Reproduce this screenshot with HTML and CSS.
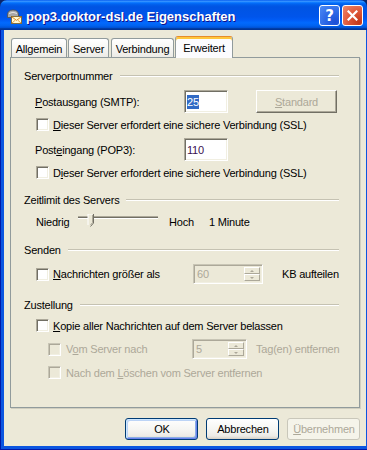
FILE: index.html
```html
<!DOCTYPE html>
<html lang="de">
<head>
    <meta charset="UTF-8">
    <title>pop3.doktor-dsl.de Eigenschaften</title>
    <link rel="stylesheet" href="styles.css">
</head>
<body>
    <div class="window">
        <div class="titlebar">
            <svg class="title-icon" width="16" height="16" viewBox="0 0 16 16">
                <path d="M1.5 7 Q1.5 2 7 2 Q12.5 2 12.5 7 L12.5 9.5 L1.5 9.5 Z" fill="#a8a8a8" stroke="#4f4f4f" stroke-width="0.8"/>
                <path d="M3 5.5 Q7 3 11 5.5" fill="none" stroke="#e6e6e6" stroke-width="1"/>
                <rect x="5.4" y="8.4" width="10.2" height="7.2" fill="#fffbd2" stroke="#7a5a1a" stroke-width="0.8"/>
                <path d="M5.8 8.8 L10.5 12.4 L15.2 8.8" fill="none" stroke="#e0872a" stroke-width="1"/>
                <path d="M5.8 15.2 L9.2 12.2 M15.2 15.2 L11.8 12.2" stroke="#e0872a" stroke-width="0.8"/>
            </svg>
            <span class="title-text">pop3.doktor-dsl.de Eigenschaften</span>
            <div class="title-buttons">
                <span class="tb-btn help">?</span>
                <span class="tb-btn close">
                    <svg width="11" height="11" viewBox="0 0 11 11">
                        <path d="M1.5 1.5 L9.5 9.5 M9.5 1.5 L1.5 9.5" stroke="#fff" stroke-width="2.2" stroke-linecap="square"/>
                    </svg>
                </span>
            </div>
        </div>

        <div class="frame">
            <div class="client">
                <div class="tabs">
                    <div class="tab tab-allgemein">Allgemein</div>
                    <div class="tab tab-server">Server</div>
                    <div class="tab tab-verbindung">Verbindung</div>
                    <div class="tab tab-erweitert active">Erweitert</div>
                </div>

                <div class="panel">
                    <div class="group">
                        <div class="group-title"><span>Serverportnummer</span><span class="etched"></span></div>
                        <div class="row port">
                            <span class="field-label"><u>P</u>ostausgang (SMTP):</span>
                            <span class="textbox"><span class="selected">25</span></span>
                            <span class="classic-btn"><u>S</u>tandard</span>
                        </div>
                        <div class="row ssl">
                            <span class="check"></span>
                            <span><u>D</u>ieser Server erfordert eine sichere Verbindung (SSL)</span>
                        </div>
                        <div class="row port">
                            <span class="field-label">Post<u>e</u>ingang (POP3):</span>
                            <span class="textbox"><span class="value">110</span></span>
                        </div>
                        <div class="row ssl">
                            <span class="check"></span>
                            <span>D<u>i</u>eser Server erfordert eine sichere Verbindung (SSL)</span>
                        </div>
                    </div>

                    <div class="group">
                        <div class="group-title"><span>Zeitlimit des Servers</span><span class="etched"></span></div>
                        <div class="row slider-row">
                            <span class="slider-low">Niedrig</span>
                            <svg class="slider" width="80" height="15" viewBox="0 0 80 15">
                                <rect x="0" y="2" width="80" height="1" fill="#aca899"/>
                                <rect x="0" y="3" width="80" height="1" fill="#716f64"/>
                                <rect x="0" y="4" width="80" height="1" fill="#ffffff"/>
                                <path d="M10 0 H15 V9 L12.5 12 L10 9 Z" fill="#ece9d8"/>
                                <path d="M10 11 V0 H14.5" fill="none" stroke="#ffffff" stroke-width="1"/>
                                <path d="M15.5 0 V9 L12.5 12.5" fill="none" stroke="#716f64" stroke-width="1"/>
                                <path d="M14.5 1 V8.5 L12.5 11" fill="none" stroke="#aca899" stroke-width="1"/>
                            </svg>
                            <span class="slider-high">Hoch</span>
                            <span>1 Minute</span>
                        </div>
                    </div>

                    <div class="group">
                        <div class="group-title"><span>Senden</span><span class="etched"></span></div>
                        <div class="row spin-row">
                            <span class="check"></span>
                            <span class="spin-label"><u>N</u>achrichten größer als</span>
                            <span class="spin spin-wide">
                                <span class="spin-value">60</span>
                                <span class="spin-arrows"><span class="arrow up"></span><span class="arrow down"></span></span>
                            </span>
                            <span class="after-spin kb">KB aufteilen</span>
                        </div>
                    </div>

                    <div class="group">
                        <div class="group-title"><span>Zustellung</span><span class="etched"></span></div>
                        <div class="row">
                            <span class="check"></span>
                            <span><u>K</u>opie aller Nachrichten auf dem Server belassen</span>
                        </div>
                        <div class="row spin-row sub disabled">
                            <span class="check"></span>
                            <span class="spin-label">V<u>o</u>m Server nach</span>
                            <span class="spin spin-narrow">
                                <span class="spin-value">5</span>
                                <span class="spin-arrows"><span class="arrow up"></span><span class="arrow down"></span></span>
                            </span>
                            <span class="after-spin days">Tag(en) entfernen</span>
                        </div>
                        <div class="row sub disabled">
                            <span class="check"></span>
                            <span>Nach dem <u>L</u>öschen vom Server entfernen</span>
                        </div>
                    </div>
                </div>

                <div class="buttons">
                    <span class="xp-btn default">OK</span>
                    <span class="xp-btn">Abbrechen</span>
                    <span class="xp-btn disabled"><u>Ü</u>bernehmen</span>
                </div>
            </div>
        </div>
    </div>
</body>
</html>
```

FILE: styles.css
```css
* {
    font-family: "Liberation Sans", Arial, sans-serif;
}

body {
    margin: 0;
    background: #0a246a;
    font-size: 11px;
    letter-spacing: -0.2px;
    color: #000;
}

.window {
    width: 367px;
    height: 450px;
    display: flex;
    flex-direction: column;
}

/* Titelleiste */
.titlebar {
    height: 30px;
    flex: none;
    display: flex;
    align-items: center;
    border-radius: 7px 7px 0 0;
    background: linear-gradient(to bottom, #0058ee 0%, #3a93ff 4%, #288eff 6%, #127dff 8%, #036ffc 10%, #0262ee 14%, #0057e5 20%, #0054e3 24%, #0055eb 56%, #005bf5 66%, #026afe 76%, #0062ef 86%, #0052d6 92%, #0040ab 94%, #003092 100%);
}

.title-icon {
    margin-left: 6px;
    margin-top: 1px;
    flex: none;
}

.title-text {
    margin-left: 4px;
    padding-top: 2px;
    font-size: 13px;
    font-weight: 700;
    letter-spacing: 0;
    color: #fff;
    text-shadow: 1px 1px #0f1089;
    flex: 1;
}

.title-buttons {
    display: flex;
    gap: 2px;
    margin-right: 4px;
    margin-top: 1px;
}

.tb-btn {
    width: 21px;
    height: 21px;
    box-sizing: border-box;
    border: 1px solid #fff;
    border-radius: 3px;
    display: flex;
    align-items: center;
    justify-content: center;
}

.tb-btn.help {
    background: radial-gradient(circle at 80% 85%, #1c4ed6 0%, #2c68e6 45%, #4d8cf6 100%);
    color: #fff;
    font-family: "DejaVu Sans", sans-serif;
    font-weight: 700;
    font-size: 15px;
    letter-spacing: 0;
}

.tb-btn.close {
    background: radial-gradient(circle at 85% 85%, #c3381a 0%, #e0593a 50%, #ee8a6e 100%);
}

/* Fensterrahmen */
.frame {
    flex: 1;
    display: flex;
    border: solid #0019a8;
    border-width: 0 1px 1px 1px;
}

.client {
    flex: 1;
    background: #ece9d8;
    border: solid #0b55e0;
    border-width: 0 3px 3px 3px;
    padding: 6px 6px 0 6px;
    display: flex;
    flex-direction: column;
}

/* Registerkarten */
.tabs {
    height: 22px;
    margin-bottom: -1px;
    display: flex;
    align-items: flex-start;
    position: relative;
    z-index: 1;
}

.tab {
    box-sizing: border-box;
    height: 19px;
    margin-top: 2px;
    border: 1px solid #919b9c;
    border-bottom: none;
    border-radius: 3px 3px 0 0;
    background: linear-gradient(to bottom, #ffffff 0%, #f7f7f4 50%, #ecebe6 100%);
    display: flex;
    align-items: center;
    justify-content: center;
    padding-top: 1px;
}

.tab-allgemein { width: 56px; margin-left: 1px; }
.tab-server { width: 41px; margin-left: 1px; }
.tab-verbindung { width: 63px; margin-left: 2px; }
.tab-erweitert { width: 58px; margin-left: 1px; }

.tab.active {
    height: 22px;
    margin-top: 0;
    padding-top: 0;
    background: #fcfcfe;
    border-top: 1px solid #e68b2c;
    box-shadow: inset 0 2px 0 #ffc73c;
}

.panel {
    height: 351px;
    box-sizing: border-box;
    border: 1px solid #919b9c;
    box-shadow: 1px 1px 0 #d0cebf;
    padding: 11px 20px 0 13px;
}

.group + .group {
    margin-top: 14px;
}

.group-title {
    height: 13px;
    display: flex;
    align-items: center;
    gap: 7px;
}

.etched {
    flex: 1;
    height: 0;
    border-top: 1px solid #c5c2b2;
    border-bottom: 1px solid #fff;
}

.row {
    height: 13px;
    margin-top: 7px;
    padding-left: 11px;
    display: flex;
    align-items: center;
    white-space: nowrap;
}

.group-title + .row {
    margin-top: 8px;
}

.row.port { height: 23px; }
.row.ssl { margin-top: 5px; }
.row.slider-row { height: 15px; }
.row.spin-row { height: 20px; }
.row.sub { padding-left: 23px; }

.disabled,
.disabled .spin-value {
    color: #aca899;
}

.field-label {
    width: 149px;
    flex: none;
}

.textbox {
    width: 44px;
    height: 23px;
    box-sizing: border-box;
    background: #fff;
    border: 1px solid;
    border-color: #aca899 #fff #fff #aca899;
    box-shadow: inset 1px 1px 0 #716f64, inset -1px -1px 0 #f1efe2;
    padding: 1px 0 0 2px;
    display: flex;
    align-items: center;
}

.textbox .selected {
    background: #316ac5;
    color: #fff;
    padding: 1px 0;
}

.textbox .value {
    color: #3a0f52;
}

.classic-btn {
    width: 81px;
    height: 23px;
    margin-left: 28px;
    box-sizing: border-box;
    border: 1px solid;
    border-color: #fff #716f64 #716f64 #fff;
    box-shadow: inset -1px -1px 0 #aca899;
    color: #aca899;
    display: flex;
    align-items: center;
    justify-content: center;
}

.check {
    width: 13px;
    height: 13px;
    flex: none;
    box-sizing: border-box;
    background: #fff;
    border: 1px solid;
    border-color: #aca899 #fff #fff #aca899;
    box-shadow: inset 1px 1px 0 #716f64, inset -1px -1px 0 #f1efe2;
    margin: 0 4px 0 1px;
}

.sub .check {
    margin-right: 5px;
    background: #ece9d8;
    border-color: #c8c5b5 #fff #fff #c8c5b5;
    box-shadow: inset 1px 1px 0 #aca899, inset -1px -1px 0 #f1efe2;
}

/* Schieberegler */
.slider-low {
    width: 42px;
    margin-left: 1px;
}

.slider {
    flex: none;
}

.slider-high {
    width: 40px;
    margin-left: 11px;
}

/* Drehfelder */
.spin-label {
    width: 140px;
    flex: none;
}

.sub .spin-label {
    width: 126px;
}

.spin {
    height: 20px;
    box-sizing: border-box;
    border: 1px solid;
    border-color: #c8c5b5 #fff #fff #c8c5b5;
    box-shadow: inset 1px 1px 0 #aca899, inset -1px -1px 0 #f1efe2;
    padding: 2px 2px 2px 2px;
    display: flex;
}

.spin-wide { width: 70px; }
.spin-narrow { width: 55px; }

.spin-value {
    flex: 1;
    color: #aca899;
    padding-left: 1px;
    line-height: 15px;
}

.spin-arrows {
    width: 16px;
    display: flex;
    flex-direction: column;
}

.arrow {
    flex: 1;
    box-sizing: border-box;
    border: 1px solid;
    border-color: #fff #aca899 #aca899 #fff;
    background: #ece9d8;
    display: flex;
    align-items: center;
    justify-content: center;
}

.arrow::after {
    content: "";
    border-left: 2px solid transparent;
    border-right: 2px solid transparent;
}

.arrow.up::after { border-bottom: 2px solid #aca899; }
.arrow.down::after { border-top: 2px solid #aca899; }

.after-spin.kb { margin-left: 19px; color: #000; }
.after-spin.days { margin-left: 9px; }

/* Schaltflächen unten */
.buttons {
    margin-top: 10px;
    height: 22px;
    display: flex;
    justify-content: flex-end;
    gap: 8px;
}

.xp-btn {
    width: 73px;
    box-sizing: border-box;
    border: 1px solid #003c74;
    border-radius: 3px;
    background: linear-gradient(to bottom, #ffffff 0%, #f4f4f0 60%, #ecebe6 85%, #d6d0c5 100%);
    display: flex;
    align-items: center;
    justify-content: center;
}

.xp-btn.default {
    box-shadow: inset 1px 1px 0 #cee7ff, inset -1px -1px 0 #6982ee, inset 2px 2px 0 #bcd4f6, inset -2px -2px 0 #89ade4;
}

.xp-btn.disabled {
    border-color: #c9c7ba;
    background: #f5f4ea;
    color: #aca899;
}
```
